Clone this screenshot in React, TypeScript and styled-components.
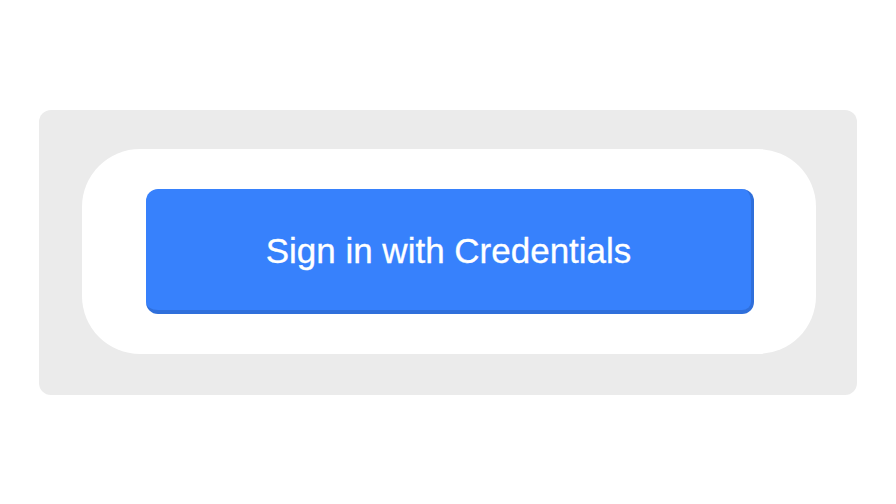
import React from "react";
import styled, { createGlobalStyle } from "styled-components";

const GlobalStyle = createGlobalStyle`
  html, body {
    margin: 0;
    padding: 0;
    background: #ffffff;
    font-family: "Liberation Sans", Arial, sans-serif;
  }
`;

const Page = styled.div`
  width: 896px;
  height: 504px;
  display: flex;
  align-items: center;
  justify-content: center;
`;

const Panel = styled.div`
  box-sizing: border-box;
  width: 818px;
  height: 285px;
  background: #ebebeb;
  border-radius: 12px;
  padding: 39px 41px 41px 43px;
  display: flex;
`;

const Card = styled.div`
  flex: 1;
  background: #ffffff;
  border-radius: 58px;
  padding: 40px 62px 40px 64px;
  display: flex;
`;

const Button = styled.button`
  flex: 1;
  box-sizing: border-box;
  margin: 0;
  background: #3781fc;
  color: #ffffff;
  border: none;
  border-right: 3px solid #2f6fdb;
  border-bottom: 4px solid #2f6fdb;
  border-radius: 12px;
  font-family: "Liberation Sans", Arial, sans-serif;
  font-size: 35px;
  padding: 4px 0 0 0;
  cursor: pointer;
  -webkit-text-stroke: 0.3px #ffffff;
`;

export default function App() {
  return (
    <>
      <GlobalStyle />
      <Page>
        <Panel>
          <Card>
            <Button>Sign in with Credentials</Button>
          </Card>
        </Panel>
      </Page>
    </>
  );
}
